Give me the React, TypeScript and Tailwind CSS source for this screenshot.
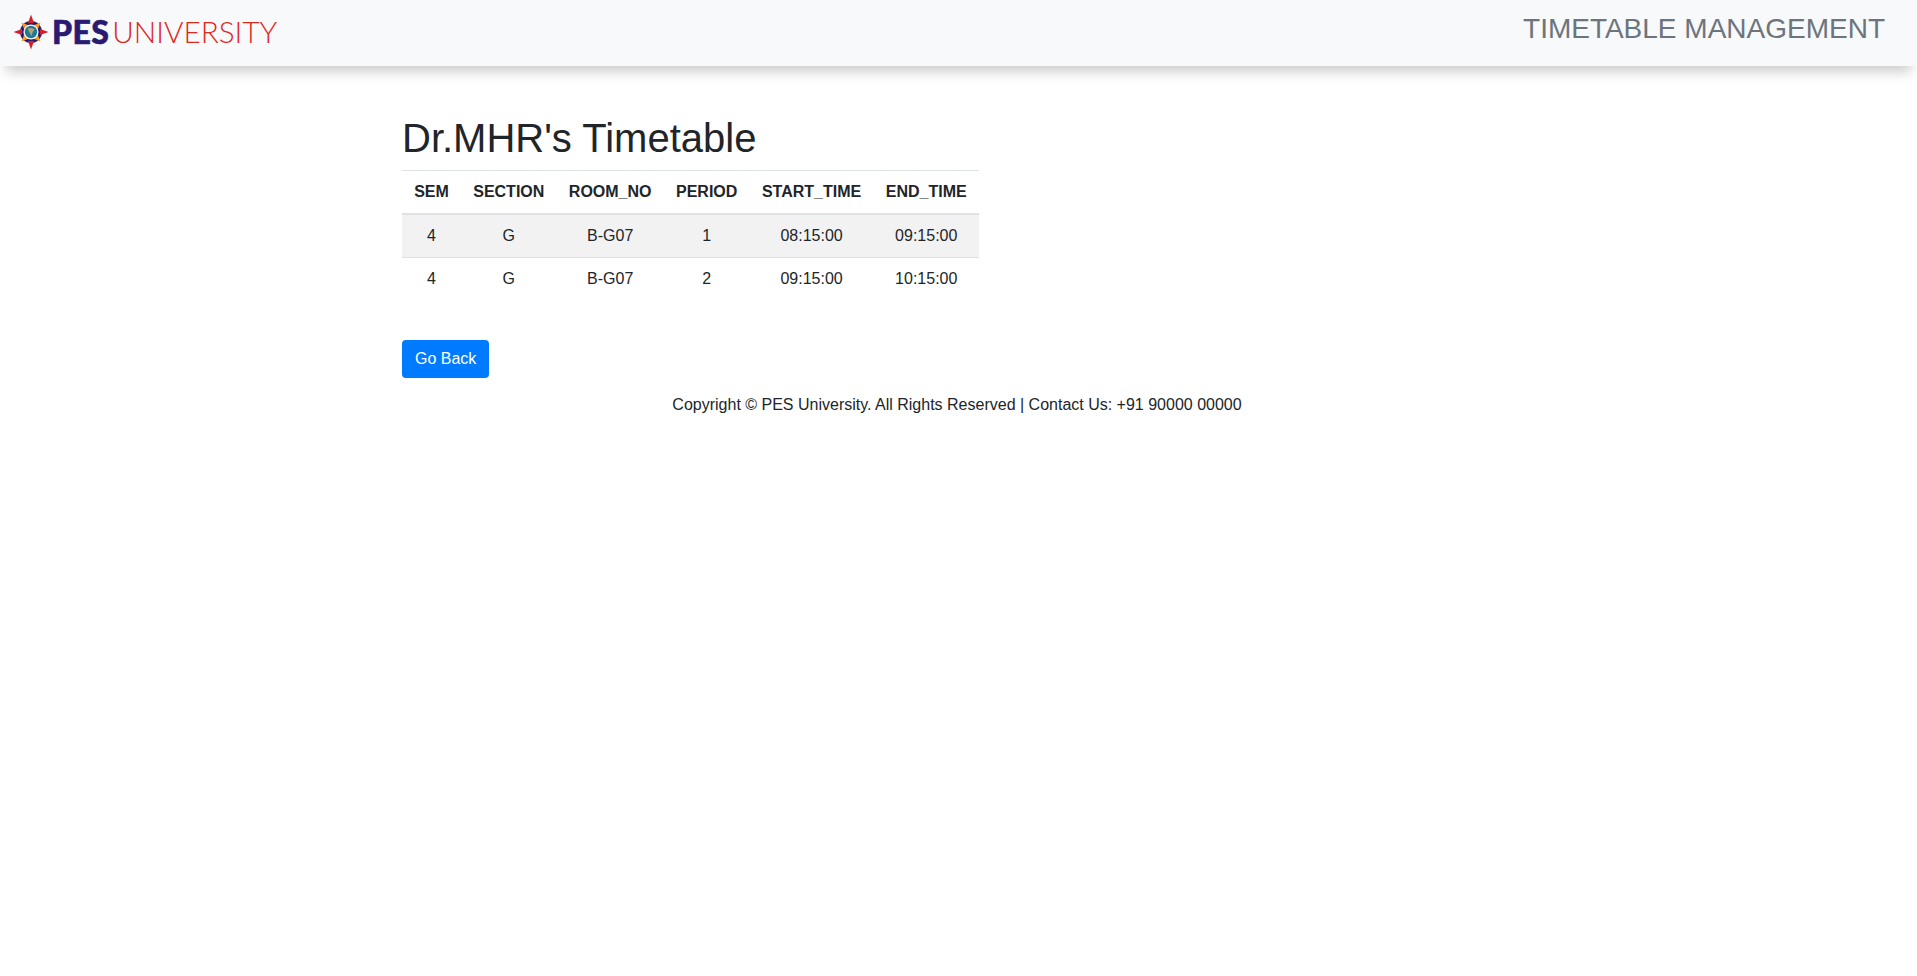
import * as React from 'react'

const rows = [
  { sem: 4, section: 'G', room: 'B-G07', period: 1, start: '08:15:00', end: '09:15:00' },
  { sem: 4, section: 'G', room: 'B-G07', period: 2, start: '09:15:00', end: '10:15:00' },
]

const headers = ['SEM', 'SECTION', 'ROOM_NO', 'PERIOD', 'START_TIME', 'END_TIME']

function Emblem() {
  return (
    <svg width="36" height="36" viewBox="0 0 36 36" className="shrink-0">
      <circle cx="18" cy="18" r="11" fill="#2a1a72" />
      <g fill="#f39a1f">
        <path d="M27.5 8.5 L24.5 16 L20 11.5 Z" />
        <path d="M27.5 27.5 L20 24.5 L24.5 20 Z" />
        <path d="M8.5 27.5 L11.5 20 L16 24.5 Z" />
        <path d="M8.5 8.5 L16 11.5 L11.5 16 Z" />
      </g>
      <g fill="#d3202a">
        <path d="M18 0.5 L21 9 L15 9 Z" />
        <path d="M18 35.5 L21 27 L15 27 Z" />
        <path d="M0.5 18 L9 15 L9 21 Z" />
        <path d="M35.5 18 L27 15 L27 21 Z" />
      </g>
      <circle cx="18" cy="18" r="7.6" fill="#f5f5f0" />
      <circle cx="18" cy="18" r="6.2" fill="#1d7a9a" />
      <path d="M14.5 14.5 L19 14 L21.5 15.5 L19.5 18.5 L18.5 22 L16.5 18.5 Z" fill="#b9a36a" />
    </svg>
  )
}

export default function App() {
  return (
    <div className="min-h-[976px] bg-white text-[#212529] font-['Liberation_Sans',Arial,sans-serif] text-base leading-6">
      <nav className="h-[66px] bg-[#f8f9fa] flex justify-between pl-[13px] pr-[32px] shadow-[0_12px_12px_-6px_rgba(0,0,0,0.2)]">
        <div className="flex items-center h-[64px] gap-[3px]">
          <Emblem />
          <span className="font-['Lato',sans-serif] font-black text-[32px] leading-none text-[#2a1a72] tracking-[0.4px] [-webkit-text-stroke:0.6px_#2a1a72]">PES</span>
          <span className="font-['Lato',sans-serif] font-light text-[29.7px] leading-none text-[#e1261c]">UNIVERSITY</span>
        </div>
        <div className="text-[28px] leading-[42px] pt-[8px] text-[#6c757d]">TIMETABLE MANAGEMENT</div>
      </nav>
      <main className="w-[1140px] ml-[387px] px-[15px]">
        <h1 className="text-[40px] leading-[48px] font-normal mt-[48px] mb-2">Dr.MHR's Timetable</h1>
        <table className="w-[577px] border-collapse text-center">
          <thead>
            <tr className="border-t border-[#dee2e6] border-b-2">
              {headers.map(h => (
                <th key={h} className="px-3 py-[9px] font-bold">{h}</th>
              ))}
            </tr>
          </thead>
          <tbody>
            {rows.map((r, i) => (
              <tr key={r.period} className={`border-t border-[#dee2e6] ${i === 0 ? 'bg-[#f2f2f2]' : ''}`}>
                <td className="px-3 py-[9px]">{r.sem}</td>
                <td className="px-3 py-[9px]">{r.section}</td>
                <td className="px-3 py-[9px]">{r.room}</td>
                <td className="px-3 py-[9px]">{r.period}</td>
                <td className="px-3 py-[9px]">{r.start}</td>
                <td className="px-3 py-[9px]">{r.end}</td>
              </tr>
            ))}
          </tbody>
        </table>
        <button className="mt-[40px] block h-[38px] px-[13px] rounded bg-[#007bff] text-white">Go Back</button>
        <p className="mt-[15px] text-center">Copyright © PES University. All Rights Reserved | Contact Us: +91 90000 00000</p>
      </main>
    </div>
  )
}
